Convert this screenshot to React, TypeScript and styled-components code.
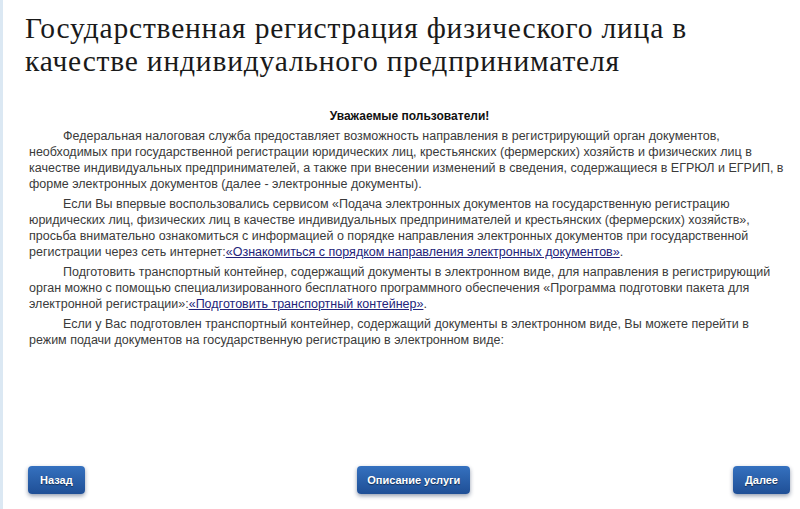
import styled, { createGlobalStyle } from "styled-components"

const GlobalStyle = createGlobalStyle`
  html, body {
    margin: 0;
    padding: 0;
    background: #ffffff;
  }
`

const Page = styled.div`
  width: 800px;
  height: 509px;
  box-sizing: border-box;
  border-left: 3px solid #dbe8f3;
  padding: 12px 10px 0 22px;
  display: flex;
  flex-direction: column;
  overflow: hidden;
`

const Title = styled.h1`
  margin: 0;
  font-family: "Liberation Serif", Tinos, "Times New Roman", Times, "DejaVu Serif", "Noto Serif", serif;
  font-weight: 400;
  font-size: 29.5px;
  letter-spacing: 0.8px;
  line-height: 33px;
  color: #1a1a1a;
`

const Content = styled.div`
  margin-top: 30px;
  padding: 0 0 0 4px;
  font-family: "Liberation Sans", Arial, sans-serif;
  font-size: 12.5px;
  line-height: 16px;
  color: #3a3a3a;
  white-space: nowrap;
`

const Greeting = styled.p`
  margin: 0 0 4px;
  text-align: center;
  font-size: 12px;
  font-weight: bold;
  color: #111;
`

const Para = styled.p`
  margin: 0 0 4px;
  text-indent: 34px;
`

const Link = styled.a`
  color: #23237a;
  text-decoration: underline;
`

const Actions = styled.div`
  margin-top: auto;
  margin-bottom: 15px;
  display: flex;
  justify-content: space-between;
  align-items: center;
  padding-left: 3px;
`

const Button = styled.button<{ $wide?: boolean }>`
  height: 28px;
  padding: 0 ${({ $wide }) => ($wide ? "10px" : "12px")};
  margin-left: ${({ $wide }) => ($wide ? "10px" : "0")};
  border: none;
  border-radius: 4px;
  background: linear-gradient(#3571bf, #1f4f96);
  box-shadow: 0 2px 4px rgba(20, 40, 80, 0.45);
  color: #fff;
  font-family: "Liberation Sans", Arial, sans-serif;
  font-size: 11px;
  font-weight: bold;
  text-shadow: 0 1px 1px rgba(0, 0, 0, 0.5);
  cursor: pointer;
`

export default function App() {
  return (
    <>
      <GlobalStyle />
      <Page>
        <Title>
          Государственная регистрация физического лица в<br />
          качестве индивидуального предпринимателя
        </Title>
        <Content>
          <Greeting>Уважаемые пользователи!</Greeting>
          <Para>
            Федеральная налоговая служба предоставляет возможность направления в регистрирующий орган документов,
            <br />
            необходимых при государственной регистрации юридических лиц, крестьянских (фермерских) хозяйств и физических лиц в
            <br />
            качестве индивидуальных предпринимателей, а также при внесении изменений в сведения, содержащиеся в ЕГРЮЛ и ЕГРИП, в
            <br />
            форме электронных документов (далее - электронные документы).
          </Para>
          <Para>
            Если Вы впервые воспользовались сервисом «Подача электронных документов на государственную регистрацию
            <br />
            юридических лиц, физических лиц в качестве индивидуальных предпринимателей и крестьянских (фермерских) хозяйств»,
            <br />
            просьба внимательно ознакомиться с информацией о порядке направления электронных документов при государственной
            <br />
            регистрации через сеть интернет:
            <Link href="#">«Ознакомиться с порядком направления электронных документов»</Link>.
          </Para>
          <Para>
            Подготовить транспортный контейнер, содержащий документы в электронном виде, для направления в регистрирующий
            <br />
            орган можно с помощью специализированного бесплатного программного обеспечения «Программа подготовки пакета для
            <br />
            электронной регистрации»:
            <Link href="#">«Подготовить транспортный контейнер»</Link>.
          </Para>
          <Para>
            Если у Вас подготовлен транспортный контейнер, содержащий документы в электронном виде, Вы можете перейти в
            <br />
            режим подачи документов на государственную регистрацию в электронном виде:
          </Para>
        </Content>
        <Actions>
          <Button>Назад</Button>
          <Button $wide>Описание услуги</Button>
          <Button>Далее</Button>
        </Actions>
      </Page>
    </>
  )
}
